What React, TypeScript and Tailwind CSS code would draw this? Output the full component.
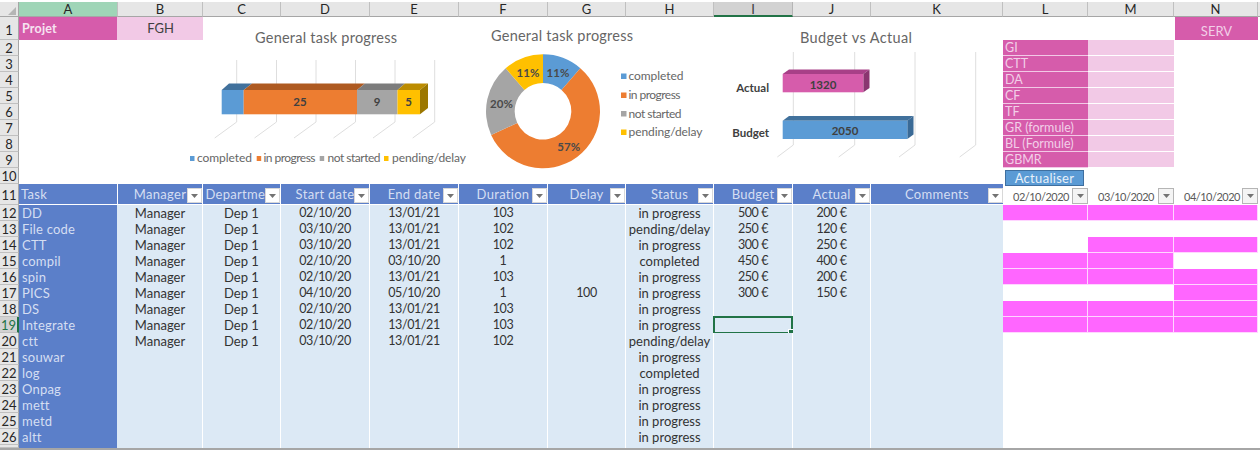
import React from "react";

const COLS = ["A","B","C","D","E","F","G","H","I","J","K","L","M","N"];
const tasks = ["DD","File code","CTT","compil","spin","PICS","DS","Integrate","ctt","souwar","log","Onpag","mett","metd","altt"];
const starts = ["02/10/20","03/10/20","03/10/20","02/10/20","02/10/20","04/10/20","02/10/20","02/10/20","03/10/20"];
const ends = ["13/01/21","13/01/21","13/01/21","03/10/20","13/01/21","05/10/20","13/01/21","13/01/21","13/01/21"];
const durations = ["103","102","102","1","103","1","103","103","102"];
const statuses = ["in progress","pending/delay","in progress","completed","in progress","in progress","in progress","in progress","pending/delay","in progress","completed","in progress","in progress","in progress","in progress"];
const budgets = ["500 €","250 €","300 €","450 €","250 €","300 €"];
const actuals = ["200 €","120 €","250 €","400 €","200 €","150 €"];
const headers = ["Task","Manager","Department","Start date","End date","Duration","Delay","Status","Budget","Actual","Comments"];
const side = ["GI","CTT","DA","CF","TF","GR (formule)","BL (Formule)","GBMR"];
const gantt: Record<number, string> = { 12: "LMN", 14: "MN", 15: "LM", 16: "LMN", 17: "N", 18: "LMN", 19: "LMN" };

function Arrow() {
  return (
    <svg width="7" height="4" viewBox="0 0 7 4" className="block">
      <polygon points="0,0 7,0 3.5,4" fill="#737373" />
    </svg>
  );
}

function FilterBtn({ grey }: { grey?: boolean }) {
  return (
    <span className={grey
      ? "absolute right-0 top-[4px] w-[16px] h-[16px] flex items-center justify-center bg-[#f4f4f4] border border-[#b5b5b5]"
      : "absolute right-0 top-[4px] w-[15px] h-[15px] flex items-center justify-center bg-white border border-[#d8d8d8]"}>
      <Arrow />
    </span>
  );
}

function bodyText(r: number, c: string): string {
  const i = r - 12;
  if (c === "A") return tasks[i] ?? "";
  if (c === "B") return i < 9 ? "Manager" : "";
  if (c === "C") return i < 9 ? "Dep 1" : "";
  if (c === "D") return starts[i] ?? "";
  if (c === "E") return ends[i] ?? "";
  if (c === "F") return durations[i] ?? "";
  if (c === "G") return r === 17 ? "100" : "";
  if (c === "H") return statuses[i] ?? "";
  if (c === "I") return budgets[i] ?? "";
  if (c === "J") return actuals[i] ?? "";
  return "";
}

function Cell({ r, c }: { r: number; c: string }) {
  const ci = COLS.indexOf(c);
  if (r === 1 && c === "A") return <div className="bg-[#d65cab] text-[#f6e3f1] font-bold text-[12.5px] leading-[23px] pl-[3px] border-r border-[#f2c9e6] tracking-[0.2px]">Projet</div>;
  if (r === 1 && c === "B") return <div className="bg-[#f2c9e6] text-[#404040] text-[13px] leading-[22px] text-center">FGH</div>;
  if (r === 1 && c === "N") return <div className="bg-[#d65cab] text-[#f2cfe8] text-[13px] leading-[28px] text-center border-l border-white">SERV</div>;
  if (r >= 2 && r <= 9 && c === "L") return <div className="bg-[#d65cab] text-[#f2cfe8] text-[12.5px] leading-[16px] pl-[2px] border-b border-[#f2c9e6] whitespace-nowrap overflow-hidden">{side[r - 2]}</div>;
  if (r >= 2 && r <= 9 && c === "M") return <div className="bg-[#f2c9e6] border-b border-white" />;
  if (r === 11 && ci <= 10) {
    return (
      <div className={c === "K" ? "relative bg-[#5b7fc9] border-b border-white" : "relative bg-[#5b7fc9] border-r border-b border-white"}>
        <div className={c === "A"
          ? "pl-[2px] text-[13px] leading-[20px] text-[#d5def2] whitespace-nowrap overflow-hidden tracking-[0.3px]"
          : "flex justify-center text-[13px] leading-[20px] text-[#d5def2] whitespace-nowrap overflow-hidden tracking-[0.3px]"}>
          {headers[ci]}
        </div>
        {c !== "A" && <FilterBtn />}
      </div>
    );
  }
  if (r === 11 && ci > 10) {
    const d = { L: "02/10/2020", M: "03/10/2020", N: "04/10/2020" }[c];
    return (
      <div className="relative">
        <div className="pl-[10px] text-[11px] tracking-[-0.5px] leading-[26px] text-[#595959] whitespace-nowrap">{d}</div>
        <FilterBtn grey />
      </div>
    );
  }
  if (r >= 12 && c === "A") return <div className="bg-[#5b7fc9] border-r border-[#dce9f5] pl-[3px] text-[13px] leading-[16px] text-[#d5def2] tracking-[0.2px] whitespace-nowrap">{bodyText(r, c)}</div>;
  if (r >= 12 && ci <= 10) {
    const numeric = "DEFGIJ".includes(c);
    return (
      <div className={c === "K"
        ? "relative bg-[#dce9f5] text-[13px] leading-[16px] text-center text-[#333333]"
        : numeric
        ? "relative bg-[#dce9f5] border-r border-white text-[12.5px] tracking-[-0.4px] leading-[16px] text-center text-[#333333] whitespace-nowrap"
        : "relative bg-[#dce9f5] border-r border-white text-[13px] leading-[16px] text-center text-[#333333] whitespace-nowrap"}>
        {bodyText(r, c)}
        {r === 19 && c === "I" && (
          <span className="absolute left-[-1px] right-[-1px] top-[-1px] bottom-[-1px] border-2 border-[#217346]">
            <span className="absolute right-[-4px] bottom-[-4px] w-[5px] h-[5px] bg-[#217346] border border-white box-content" />
          </span>
        )}
      </div>
    );
  }
  if (r >= 12 && gantt[r]?.includes(c)) return <div className="bg-[#ff66ff] border-r border-b border-[#ffd6ff]" />;
  return <div />;
}

function Chart1() {
  const xs = [236.7, 276.5, 316, 355.5, 395, 434.7];
  return (
    <svg className="absolute left-0 top-0 pointer-events-none" width="480" height="180" style={{ fontFamily: "Lato, sans-serif" }}>
      <text x="326" y="43" textAnchor="middle" fontSize="14.5" fill="#666666" textLength="142">General task progress</text>
      {xs.map((x) => (
        <g key={x} stroke="#dedede" fill="none"><line x1={x} y1="60" x2={x} y2="122" /><line x1={x} y1="122" x2={x - 22} y2="138" /></g>
      ))}
      <polygon points="221.7,90 229,83.5 252,83.5 243.7,90" fill="#41719c" />
      <polygon points="243.7,90 252,83.5 365,83.5 357,90" fill="#ae5a21" />
      <polygon points="357,90 365,83.5 405,83.5 397.5,90" fill="#7c7c7c" />
      <polygon points="397.5,90 405,83.5 428,83.5 420,90" fill="#bc8c00" />
      <polygon points="420,90 428,83.5 428,108 420,114.3" fill="#9c7700" />
      <rect x="221.7" y="90" width="22" height="24.3" fill="#5b9bd5" />
      <rect x="243.7" y="90" width="113.3" height="24.3" fill="#ed7d31" />
      <rect x="357" y="90" width="40.5" height="24.3" fill="#a5a5a5" />
      <rect x="397.5" y="90" width="22.5" height="24.3" fill="#ffc000" />
      <g fontSize="11.5" fontWeight="700" fill="#404040" textAnchor="middle">
        <text x="300" y="106">25</text><text x="377" y="106">9</text><text x="408.5" y="106">5</text>
      </g>
      <rect x="190" y="156" width="4.5" height="5" fill="#5b9bd5" />
      <rect x="256.7" y="156" width="4.5" height="5" fill="#ed7d31" />
      <rect x="319.7" y="156" width="4.5" height="5" fill="#a5a5a5" />
      <rect x="384" y="156" width="4.5" height="5" fill="#ffc000" />
      <g fontSize="12" fill="#666666">
        <text x="197" y="162" textLength="55">completed</text>
        <text x="263.5" y="162" textLength="52">in progress</text>
        <text x="327.5" y="162" textLength="53">not started</text>
        <text x="392" y="162" textLength="74">pending/delay</text>
      </g>
    </svg>
  );
}

function polar(r: number, a: number) {
  const t = ((a - 90) * Math.PI) / 180;
  return [543 + r * Math.cos(t), 111.3 + r * Math.sin(t)];
}
function arc(a0: number, a1: number) {
  const [x0, y0] = polar(57, a0), [x1, y1] = polar(57, a1), [x2, y2] = polar(28.3, a1), [x3, y3] = polar(28.3, a0);
  const large = a1 - a0 > 180 ? 1 : 0;
  return `M${x0} ${y0}A57 57 0 ${large} 1 ${x1} ${y1}L${x2} ${y2}A28.3 28.3 0 ${large} 0 ${x3} ${y3}Z`;
}

function Chart2() {
  const segs: [number, number, string][] = [[0, 40.9, "#5b9bd5"], [40.9, 245.5, "#ed7d31"], [245.5, 319.1, "#a5a5a5"], [319.1, 360, "#ffc000"]];
  const leg: [string, string, number, number][] = [["completed", "#5b9bd5", 76, 55], ["in progress", "#ed7d31", 95, 52], ["not started", "#a5a5a5", 113.5, 53], ["pending/delay", "#ffc000", 132, 74]];
  return (
    <svg className="absolute left-[470px] top-0 pointer-events-none" width="250" height="180" viewBox="470 0 250 180" style={{ fontFamily: "Lato, sans-serif" }}>
      <text x="562" y="41" textAnchor="middle" fontSize="14.5" fill="#666666" textLength="142">General task progress</text>
      {segs.map((s) => <path key={s[0]} d={arc(s[0], s[1])} fill={s[2]} />)}
      <g fontSize="11.5" fontWeight="700" fill="#4a4a4a" textAnchor="middle">
        <text x="558" y="76.5">11%</text><text x="528" y="76.5">11%</text><text x="501.5" y="107.5">20%</text><text x="568.7" y="151">57%</text>
      </g>
      {leg.map(([t, col, y, w]) => (
        <g key={t}>
          <rect x="621" y={y - 2.5} width="5.5" height="5.5" fill={col} />
          <text x="628.5" y={y + 4} fontSize="12" fill="#666666" textLength={w}>{t}</text>
        </g>
      ))}
    </svg>
  );
}

function Chart3() {
  const xs = [793.3, 854.7, 915, 975.7];
  return (
    <svg className="absolute left-[720px] top-0 pointer-events-none" width="280" height="180" viewBox="720 0 280 180" style={{ fontFamily: "Lato, sans-serif" }}>
      <text x="856" y="43" textAnchor="middle" fontSize="14.5" fill="#666666" textLength="112">Budget vs Actual</text>
      {xs.map((x) => (
        <g key={x} stroke="#dedede" fill="none"><line x1={x} y1="52" x2={x} y2="145" /><line x1={x} y1="145" x2={x - 16} y2="157" /></g>
      ))}
      <polygon points="782.7,74 789,69.5 869.5,69.5 863.3,74" fill="#a84088" />
      <polygon points="863.3,74 869.5,69.5 869.5,88 863.3,92.3" fill="#8a3570" />
      <rect x="782.7" y="74" width="80.6" height="18.3" fill="#d65cab" />
      <polygon points="782.7,120.7 789,116 913.5,116 907.3,120.7" fill="#41719c" />
      <polygon points="907.3,120.7 913.5,116 913.5,134.5 907.3,139" fill="#3a6a96" />
      <rect x="782.7" y="120.7" width="124.6" height="18.3" fill="#5b9bd5" />
      <g fontSize="11.5" fontWeight="700" fill="#404040">
        <text x="823" y="89" textAnchor="middle">1320</text>
        <text x="845" y="135" textAnchor="middle">2050</text>
      </g>
      <g fontSize="11.5" fontWeight="700" fill="#404040">
        <text x="769" y="92" textAnchor="end">Actual</text>
        <text x="769" y="137" textAnchor="end">Budget</text>
      </g>
    </svg>
  );
}

export default function App() {
  const rows = Array.from({ length: 27 }, (_, i) => i + 1);
  return (
    <div className="relative w-[1260px] h-[450px] overflow-hidden bg-white font-['Lato',sans-serif]">
      <div className="grid grid-cols-[19px_99px_85px_78px_89px_89px_89px_78px_88px_79px_78px_132px_85px_86px_84px_2px] grid-rows-[15px_23px_repeat(9,16px)_21px_repeat(15,16px)_3px] mt-[2px] border-b-2 border-[#a6a6a6]">
        <div className="relative bg-[#e6e6e6] border-r border-b border-[#a6a6a6]">
          <svg width="8" height="8" className="absolute right-[2px] bottom-[1px]"><polygon points="8,0 8,8 0,8" fill="#b5b5b5" /></svg>
        </div>
        {COLS.map((c) => (
          <div
            key={c}
            className={
              c === "A"
                ? "bg-[#9fd5b7] border-b border-[#a6a6a6] border-r border-r-[#c0c0c0] text-[13px] leading-[14px] text-center text-[#262626]"
                : c === "I"
                ? "bg-[#d2d2d2] border-b-2 border-[#217346] border-r border-r-[#b5b5b5] text-[13px] leading-[14px] text-center text-[#404040]"
                : "bg-[#e6e6e6] border-b border-[#a6a6a6] border-r border-r-[#c0c0c0] text-[13px] leading-[14px] text-center text-[#262626]"
            }
          >
            {c}
          </div>
        ))}
        <div className="bg-[#e6e6e6] border-b border-[#a6a6a6]" />
        {rows.map((r) => (
          <React.Fragment key={r}>
            <div
              className={
                r === 19
                  ? "bg-[#d2d2d2] border-r-2 border-[#217346] border-b border-b-[#c0c0c0] text-[#217346] text-[13px] leading-[16px] text-center overflow-hidden"
                  : r === 1 || r === 11
                  ? "bg-[#e6e6e6] border-r border-[#a6a6a6] border-b border-b-[#c0c0c0] text-[#262626] text-[13px] flex items-end justify-center leading-[17px] overflow-hidden"
                  : "bg-[#e6e6e6] border-r border-[#a6a6a6] border-b border-b-[#c0c0c0] text-[#262626] text-[13px] leading-[16px] text-center overflow-hidden"
              }
            >
              {r === 27 ? "" : r}
            </div>
            {COLS.map((c) => (
              <Cell key={c} r={r} c={c} />
            ))}
            <div />
          </React.Fragment>
        ))}
      </div>
      <Chart1 />
      <Chart2 />
      <Chart3 />
      <button className="absolute left-[1005px] top-[170px] w-[79px] h-[16px] bg-[#5b9bd5] border border-[#3f6f9f] text-[#e8f1fa] text-[13px] leading-[13px] tracking-[0.3px] text-center">
        Actualiser
      </button>
    </div>
  );
}
